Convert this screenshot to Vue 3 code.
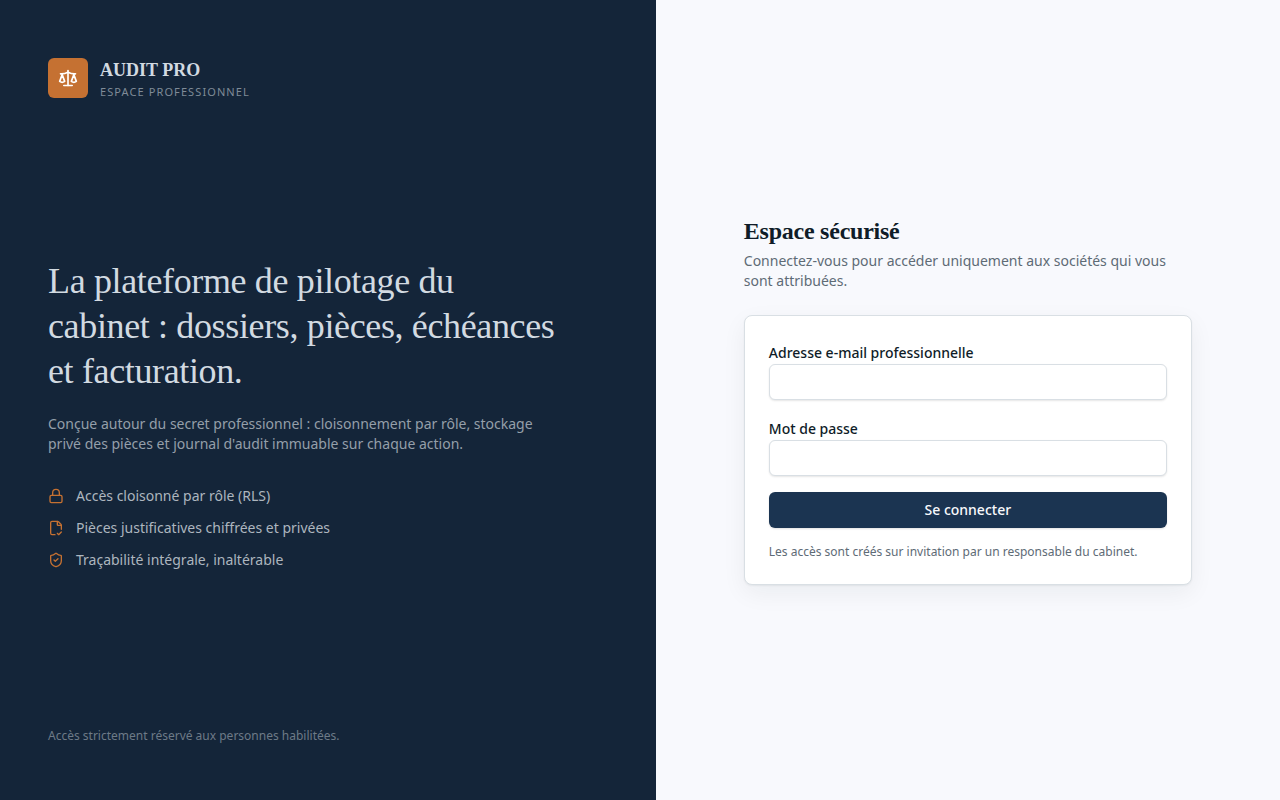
<script setup>
import { ref } from 'vue'

const email = ref('')
const password = ref('')

const features = [
  {
    label: 'Accès cloisonné par rôle (RLS)',
    paths: [
      'M5 11h14a2 2 0 0 1 2 2v7a2 2 0 0 1-2 2H5a2 2 0 0 1-2-2v-7a2 2 0 0 1 2-2z',
      'M7 11V7a5 5 0 0 1 10 0v4',
    ],
  },
  {
    label: 'Pièces justificatives chiffrées et privées',
    paths: [
      'M10.5 22H6a2 2 0 0 1-2-2V4a2 2 0 0 1 2-2h8a2.4 2.4 0 0 1 1.706.706l3.588 3.588A2.4 2.4 0 0 1 20 8v6',
      'M14 2v5a1 1 0 0 0 1 1h5',
      'm14 20 2 2 4-4',
    ],
  },
  {
    label: 'Traçabilité intégrale, inaltérable',
    paths: [
      'M20 13c0 5-3.5 7.5-7.66 8.95a1 1 0 0 1-.67-.01C7.5 20.5 4 18 4 13V6a1 1 0 0 1 1-1c2 0 4.5-1.2 6.24-2.72a1.17 1.17 0 0 1 1.52 0C14.51 3.81 17 5 19 5a1 1 0 0 1 1 1z',
      'm9 12 2 2 4-4',
    ],
  },
]
</script>

<template>
  <div class="page">
    <aside class="intro">
      <div class="brand">
        <span class="brand-mark">
          <svg viewBox="0 0 24 24" aria-hidden="true">
            <path d="M12 3v18" />
            <path d="m19 8 3 8a5 5 0 0 1-6 0zV7" />
            <path d="M3 7h1a17 17 0 0 0 8-2 17 17 0 0 0 8 2h1" />
            <path d="m5 8 3 8a5 5 0 0 1-6 0zV7" />
            <path d="M7 21h10" />
          </svg>
        </span>
        <div>
          <p class="brand-name">AUDIT PRO</p>
          <p class="brand-sub">Espace professionnel</p>
        </div>
      </div>

      <div class="pitch">
        <h1>La plateforme de pilotage du cabinet : dossiers, pièces, échéances et facturation.</h1>
        <p class="lead">
          Conçue autour du secret professionnel : cloisonnement par rôle, stockage privé des pièces
          et journal d'audit immuable sur chaque action.
        </p>
        <ul class="features">
          <li v-for="feature in features" :key="feature.label">
            <svg viewBox="0 0 24 24" aria-hidden="true">
              <path v-for="d in feature.paths" :key="d" :d="d" />
            </svg>
            <span>{{ feature.label }}</span>
          </li>
        </ul>
      </div>

      <p class="legal">Accès strictement réservé aux personnes habilitées.</p>
    </aside>

    <main class="access">
      <div class="panel">
        <h2>Espace sécurisé</h2>
        <p class="hint">
          Connectez-vous pour accéder uniquement aux sociétés qui vous sont attribuées.
        </p>
        <form class="card" @submit.prevent>
          <div class="field">
            <label for="email">Adresse e-mail professionnelle</label>
            <input id="email" v-model="email" type="email" autocomplete="email" />
          </div>
          <div class="field">
            <label for="password">Mot de passe</label>
            <input id="password" v-model="password" type="password" autocomplete="current-password" />
          </div>
          <button type="submit">Se connecter</button>
          <p class="note">Les accès sont créés sur invitation par un responsable du cabinet.</p>
        </form>
      </div>
    </main>
  </div>
</template>

<style>
body {
  margin: 0;
}
</style>

<style scoped>
.page {
  display: grid;
  grid-template-columns: 1.05fr 1fr;
  min-height: 100vh;
  background: #f8f9fd;
  color: #0f1c28;
  font-family: "Noto Sans", sans-serif;
  font-size: 14px;
  line-height: 20px;
}

.page *,
.page {
  box-sizing: border-box;
}

h1,
h2,
p,
ul {
  margin: 0;
  padding: 0;
}

h1,
h2 {
  font-family: "Liberation Serif", serif;
  letter-spacing: -0.01em;
}

svg {
  flex: none;
  fill: none;
  stroke: currentColor;
  stroke-width: 2;
  stroke-linecap: round;
  stroke-linejoin: round;
}

.intro {
  display: flex;
  flex-direction: column;
  justify-content: space-between;
  padding: 56px 48px;
  background: #142539;
  color: #d2dae1;
}

.brand {
  display: flex;
  align-items: center;
  gap: 12px;
}

.brand-mark {
  display: flex;
  align-items: center;
  justify-content: center;
  width: 40px;
  height: 40px;
  border-radius: 6px;
  background: #c57132;
  color: #ffffff;
}

.brand-mark svg {
  width: 20px;
  height: 20px;
}

.brand-name {
  font-family: "Liberation Serif", serif;
  font-size: 18px;
  font-weight: 700;
  line-height: 28px;
}

.brand-sub {
  color: #7f8b97;
  font-size: 11px;
  line-height: 16px;
  letter-spacing: 0.1em;
  text-transform: uppercase;
}

.pitch {
  max-width: 512px;
}

h1 {
  font-size: 36px;
  font-weight: 400;
  line-height: 45px;
}

.lead {
  margin-top: 20px;
  color: #949fa9;
}

.features {
  display: grid;
  gap: 12px;
  margin-top: 32px;
  color: #adb6bf;
  list-style: none;
}

.features li {
  display: flex;
  align-items: center;
  gap: 12px;
}

.features svg {
  width: 16px;
  height: 16px;
  color: #c57132;
}

.legal {
  color: #6d7a87;
  font-size: 12px;
  line-height: 16px;
}

.access {
  display: flex;
  align-items: center;
  justify-content: center;
  padding: 48px 24px;
}

.panel {
  width: 100%;
  max-width: 448px;
}

h2 {
  font-size: 24px;
  font-weight: 700;
  line-height: 32px;
}

.hint {
  margin-top: 4px;
  color: #5e6b76;
}

.card {
  display: grid;
  gap: 16px;
  margin-top: 24px;
  padding: 24px;
  border: 1px solid #d9dfe4;
  border-radius: 8px;
  background: #ffffff;
  box-shadow: 0 1px 2px rgba(15, 27, 40, 0.06), 0 8px 24px rgba(15, 27, 40, 0.06);
}

.field {
  font-size: 16px;
  line-height: 24px;
}

label {
  font-size: 14px;
  font-weight: 500;
  line-height: 20px;
}

input {
  display: block;
  width: 100%;
  height: 36px;
  padding: 4px 12px;
  border: 1px solid #d9dfe4;
  border-radius: 6px;
  background: #ffffff;
  box-shadow: 0 1px 2px rgba(0, 0, 0, 0.1);
  color: inherit;
  font: inherit;
  font-size: 14px;
}

button {
  height: 36px;
  padding: 8px 16px;
  border: 0;
  border-radius: 6px;
  background: #1b3451;
  box-shadow: 0 1px 2px rgba(0, 0, 0, 0.12);
  color: #f8f9fc;
  font: inherit;
  font-weight: 500;
  cursor: pointer;
}

.note {
  color: #5e6b76;
  font-size: 12px;
  line-height: 16px;
}
</style>
